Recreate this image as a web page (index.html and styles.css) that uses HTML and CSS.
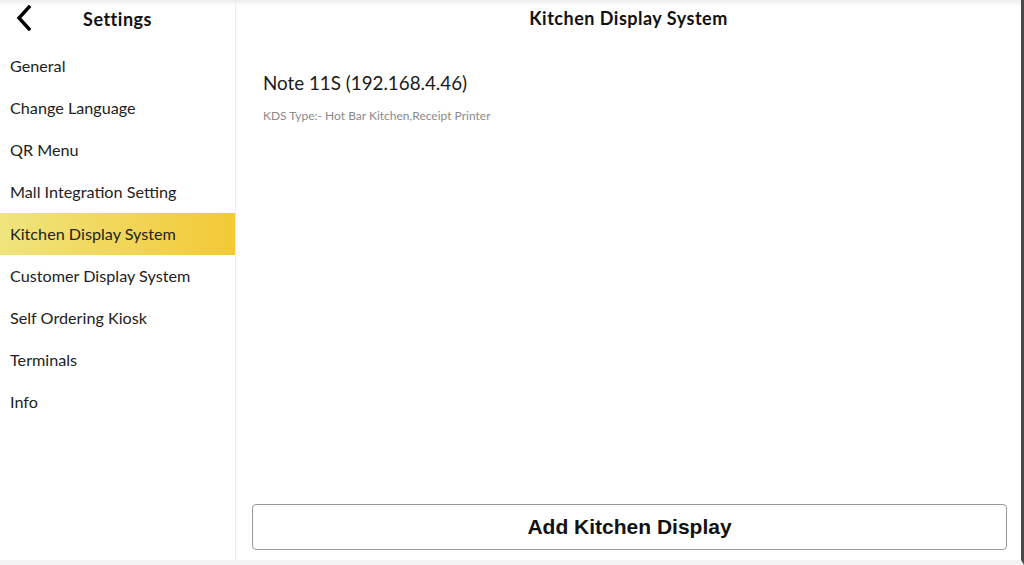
FILE: index.html
```html
<!DOCTYPE html>
<html lang="en">
<head>
  <meta charset="UTF-8" />
  <meta name="viewport" content="width=device-width, initial-scale=1.0"/>
  <title>Settings - Kitchen Display System</title>
  <link rel="stylesheet" href="styles.css">
</head>
<body>

<div class="app">

  <aside class="sidebar">
    <div class="side-header">
      <button class="back" aria-label="Back">
        <svg width="18" height="26" viewBox="0 0 18 26">
          <path d="M14 2 L4 13 L14 24" fill="none" stroke="#000" stroke-width="3.4" stroke-linecap="square"/>
        </svg>
      </button>
      <h1>Settings</h1>
    </div>
    <ul class="menu">
      <li>General</li>
      <li>Change Language</li>
      <li>QR Menu</li>
      <li>Mall Integration Setting</li>
      <li class="active">Kitchen Display System</li>
      <li>Customer Display System</li>
      <li>Self Ordering Kiosk</li>
      <li>Terminals</li>
      <li>Info</li>
    </ul>
  </aside>

  <main class="content">
    <h2 class="page-title">Kitchen Display System</h2>

    <div class="device">
      <div class="device-name">Note 11S (192.168.4.46)</div>
      <div class="device-type">KDS Type:- Hot Bar Kitchen,Receipt Printer</div>
    </div>

    <div class="actions">
      <button class="add-btn">Add Kitchen Display</button>
    </div>
  </main>

</div>

</body>
</html>
```

FILE: styles.css
```css
html, body {
  margin: 0;
  padding: 0;
  height: 100%;
}
body {
  font-family: Lato, "Open Sans", sans-serif;
  background: #fff;
  color: #1c1c1c;
  overflow: hidden;
}
.app {
  display: flex;
  height: 560px;
  width: 1021px;
  border-right: 3px solid #4a4a4a;
  border-bottom: 5px solid #f3f3f3;
  background: linear-gradient(to bottom, #ececec 0, #fff 6px);
}
.sidebar {
  width: 235px;
  border-right: 1px solid #ececec;
  flex-shrink: 0;
}
.side-header {
  height: 38px;
  display: flex;
  align-items: center;
  position: relative;
  justify-content: center;
}
.back {
  position: absolute;
  left: 15px;
  top: 5px;
  background: none;
  border: none;
  padding: 0;
  cursor: pointer;
}
.side-header h1 {
  margin: 0;
  font-size: 18px;
  letter-spacing: 0.5px;
  font-weight: 700;
  color: #111;
}
.menu {
  list-style: none;
  margin: 7px 0 0;
  padding: 0;
}
.menu li {
  height: 42px;
  line-height: 42px;
  padding-left: 10px;
  font-size: 16.2px;
  color: #222;
}
.menu li.active {
  background: linear-gradient(to right, #efe47e, #f3c935);
}
.content {
  flex: 1;
  display: flex;
  flex-direction: column;
}
.page-title {
  margin: 0;
  height: 37px;
  line-height: 37px;
  text-align: center;
  font-size: 18px;
  letter-spacing: 0.5px;
  font-weight: 700;
  color: #111;
}
.device {
  padding: 34px 0 0 27px;
}
.device-name {
  font-size: 18.8px;
  color: #1a1a1a;
}
.device-type {
  margin-top: 14px;
  font-size: 12px;
  color: #8a8a8a;
}
.actions {
  margin-top: auto;
  padding: 0 14px 10px 16px;
}
.add-btn {
  width: 100%;
  height: 46px;
  background: #fff;
  border: 1px solid #9a9a9a;
  border-radius: 4px;
  font-family: "Liberation Sans", Arial, sans-serif;
  font-weight: 700;
  font-size: 21px;
  color: #111;
  cursor: pointer;
}
```
